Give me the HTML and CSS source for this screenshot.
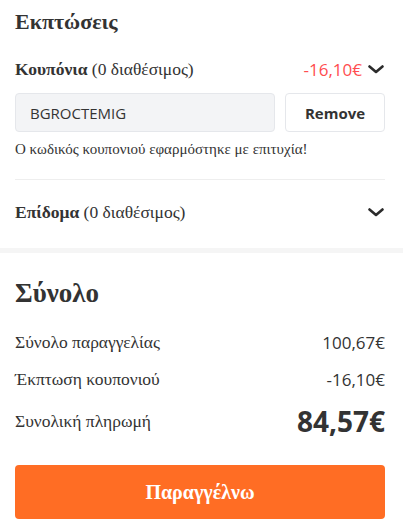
FILE: index.html
```html
<!DOCTYPE html>
<html lang="el">
<head>
<meta charset="utf-8">
<link rel="stylesheet" href="styles.css">
</head>
<body>
<section class="discounts">
  <h2 class="title">Εκπτώσεις</h2>
  <div class="line coupon-line">
    <div class="label"><b>Κουπόνια</b> (0 διαθέσιμος)</div>
    <div class="right">
      <span class="neg">-16,10€</span>
      <svg class="chev" viewBox="0 0 16 9" width="16" height="9"><path d="M1.5 1.5 L8 7 L14.5 1.5" fill="none" stroke="#2b2b2b" stroke-width="2.6" stroke-linecap="round" stroke-linejoin="round"/></svg>
    </div>
  </div>
  <div class="code-row">
    <div class="code-input">BGROCTEMIG</div>
    <button class="remove">Remove</button>
  </div>
  <p class="msg">Ο κωδικός κουπονιού εφαρμόστηκε με επιτυχία!</p>
  <hr class="divider">
  <div class="line bonus-line">
    <div class="label"><b>Επίδομα</b> (0 διαθέσιμος)</div>
    <div class="right">
      <svg class="chev" viewBox="0 0 16 9" width="16" height="9"><path d="M1.5 1.5 L8 7 L14.5 1.5" fill="none" stroke="#2b2b2b" stroke-width="2.6" stroke-linecap="round" stroke-linejoin="round"/></svg>
    </div>
  </div>
</section>
<div class="band"></div>
<section class="total">
  <h2 class="title big">Σύνολο</h2>
  <div class="sum-row r1"><span class="k">Σύνολο παραγγελίας</span><span class="v">100,67€</span></div>
  <div class="sum-row r2"><span class="k">Έκπτωση κουπονιού</span><span class="v">-16,10€</span></div>
  <div class="sum-row r3"><span class="k">Συνολική πληρωμή</span><span class="v grand">84,57€</span></div>
  <button class="order">Παραγγέλνω</button>
</section>
</body>
</html>
```
FILE: styles.css
```css
* { box-sizing: border-box; }
body {
  margin: 0;
  background: #fff;
  color: #333;
  font-family: "Liberation Serif", "Times New Roman", serif;
}
.discounts { padding: 9px 18px 0 15px; }
.title {
  margin: 0;
  font-size: 22px;
  line-height: 26px;
  font-weight: bold;
  color: #333;
}
.line {
  display: flex;
  justify-content: space-between;
  align-items: center;
  height: 24px;
}
.label { font-size: 17.5px; }
.label b { font-weight: bold; }
.coupon-line { margin-top: 22px; }
.right { display: flex; align-items: center; gap: 6px; }
.neg {
  font-family: "Open Sans", sans-serif;
  font-size: 17px;
  color: #ff4d4f;
}
.chev { display: block; margin-right: 1px; }
.code-row {
  display: flex;
  gap: 10px;
  margin-top: 12px;
  height: 39px;
}
.code-input {
  flex: 1;
  background: #f3f4f6;
  border: 1px solid #e5e7eb;
  border-radius: 4px;
  display: flex;
  align-items: center;
  padding: 0 14px;
  font-family: "Open Sans", sans-serif;
  font-size: 15px;
  color: #333;
}
.remove {
  width: 100px;
  background: #fff;
  border: 1px solid #e5e7eb;
  border-radius: 4px;
  font-family: "Open Sans", sans-serif;
  font-weight: bold;
  font-size: 15px;
  color: #333;
  padding: 0;
}
.msg {
  margin: 7px 0 0;
  font-size: 15px;
  line-height: 20px;
}
.divider {
  margin: 20px 0 0;
  border: 0;
  border-top: 1px solid #eeeeee;
  height: 0;
}
.bonus-line { margin-top: 20px; }
.band {
  margin-top: 24px;
  height: 5px;
  background: #f5f5f5;
}
.total { padding: 24px 18px 0 15px; }
.title.big { font-size: 27px; line-height: 32px; }
.sum-row {
  display: flex;
  justify-content: space-between;
  align-items: center;
  height: 24px;
}
.sum-row .k { font-size: 17.5px; }
.sum-row .v {
  font-family: "Open Sans", sans-serif;
  font-size: 17px;
}
.r1 { margin-top: 21px; }
.r2 { margin-top: 13px; }
.r3 { margin-top: 12px; height: 36px; }
.sum-row .grand { font-weight: bold; font-size: 28px; }
.order {
  display: block;
  width: 100%;
  margin-top: 26px;
  height: 54px;
  border: 0;
  border-radius: 4px;
  background: #ff6d24;
  color: #fff;
  font-family: "Liberation Serif", "Times New Roman", serif;
  font-weight: bold;
  font-size: 20px;
}
```
